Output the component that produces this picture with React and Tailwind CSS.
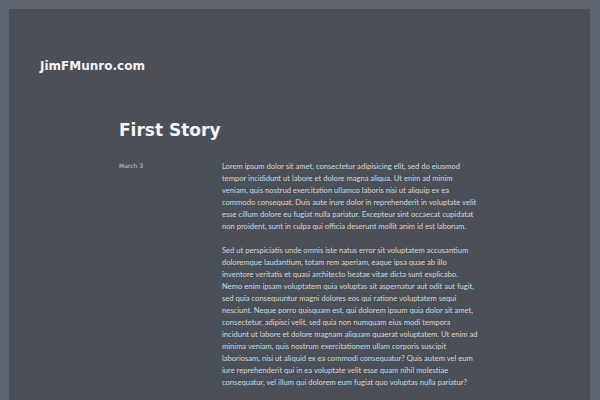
import React from 'react';

const storyParagraphs = [
  [
    'Lorem ipsum dolor sit amet, consectetur adipisicing elit, sed do eiusmod',
    'tempor incididunt ut labore et dolore magna aliqua. Ut enim ad minim',
    'veniam, quis nostrud exercitation ullamco laboris nisi ut aliquip ex ea',
    'commodo consequat. Duis aute irure dolor in reprehenderit in voluptate velit',
    'esse cillum dolore eu fugiat nulla pariatur. Excepteur sint occaecat cupidatat',
    'non proident, sunt in culpa qui officia deserunt mollit anim id est laborum.',
  ],
  [
    'Sed ut perspiciatis unde omnis iste natus error sit voluptatem accusantium',
    'doloremque laudantium, totam rem aperiam, eaque ipsa quae ab illo',
    'inventore veritatis et quasi architecto beatae vitae dicta sunt explicabo.',
    'Nemo enim ipsam voluptatem quia voluptas sit aspernatur aut odit aut fugit,',
    'sed quia consequuntur magni dolores eos qui ratione voluptatem sequi',
    'nesciunt. Neque porro quisquam est, qui dolorem ipsum quia dolor sit amet,',
    'consectetur, adipisci velit, sed quia non numquam eius modi tempora',
    'incidunt ut labore et dolore magnam aliquam quaerat voluptatem. Ut enim ad',
    'minima veniam, quis nostrum exercitationem ullam corporis suscipit',
    'laboriosam, nisi ut aliquid ex ea commodi consequatur? Quis autem vel eum',
    'iure reprehenderit qui in ea voluptate velit esse quam nihil molestiae',
    'consequatur, vel illum qui dolorem eum fugiat quo voluptas nulla pariatur?',
  ],
];

const App = () => {
  return (
    <div className="w-[600px] h-[400px] overflow-hidden bg-[#5f656e] pt-[9px] pl-[9px] pr-[10px]">
      <div className="h-[420px] bg-[#4b5058] font-['DejaVu_Sans',sans-serif]">
        {/* Site header */}
        <header className="pt-[44px] pl-[31px]">
          <a href="/" className="text-[12px] font-bold leading-[16px] text-[#f2f3f5]">
            JimFMunro.com
          </a>
        </header>

        {/* Post */}
        <article className="mt-[42px] pl-[110px]">
          <h1 className="text-[17px] font-bold leading-[22px] text-[#f4f5f7]">First Story</h1>

          <div className="mt-[19px] flex">
            <p className="w-[103px] shrink-0 text-[6px] leading-[12px] text-[#c9ccd1]">March 3</p>

            <div className="flex flex-col gap-[12px] font-['Lato',sans-serif] text-[7.6px] leading-[12px] text-[#d4d7dc]">
              {storyParagraphs.map((lines, idx) => (
                <p key={idx} className="whitespace-nowrap">
                  {lines.map((line, i) => (
                    <span key={i} className="block">{line}</span>
                  ))}
                </p>
              ))}
            </div>
          </div>
        </article>
      </div>
    </div>
  );
};

export default App;
